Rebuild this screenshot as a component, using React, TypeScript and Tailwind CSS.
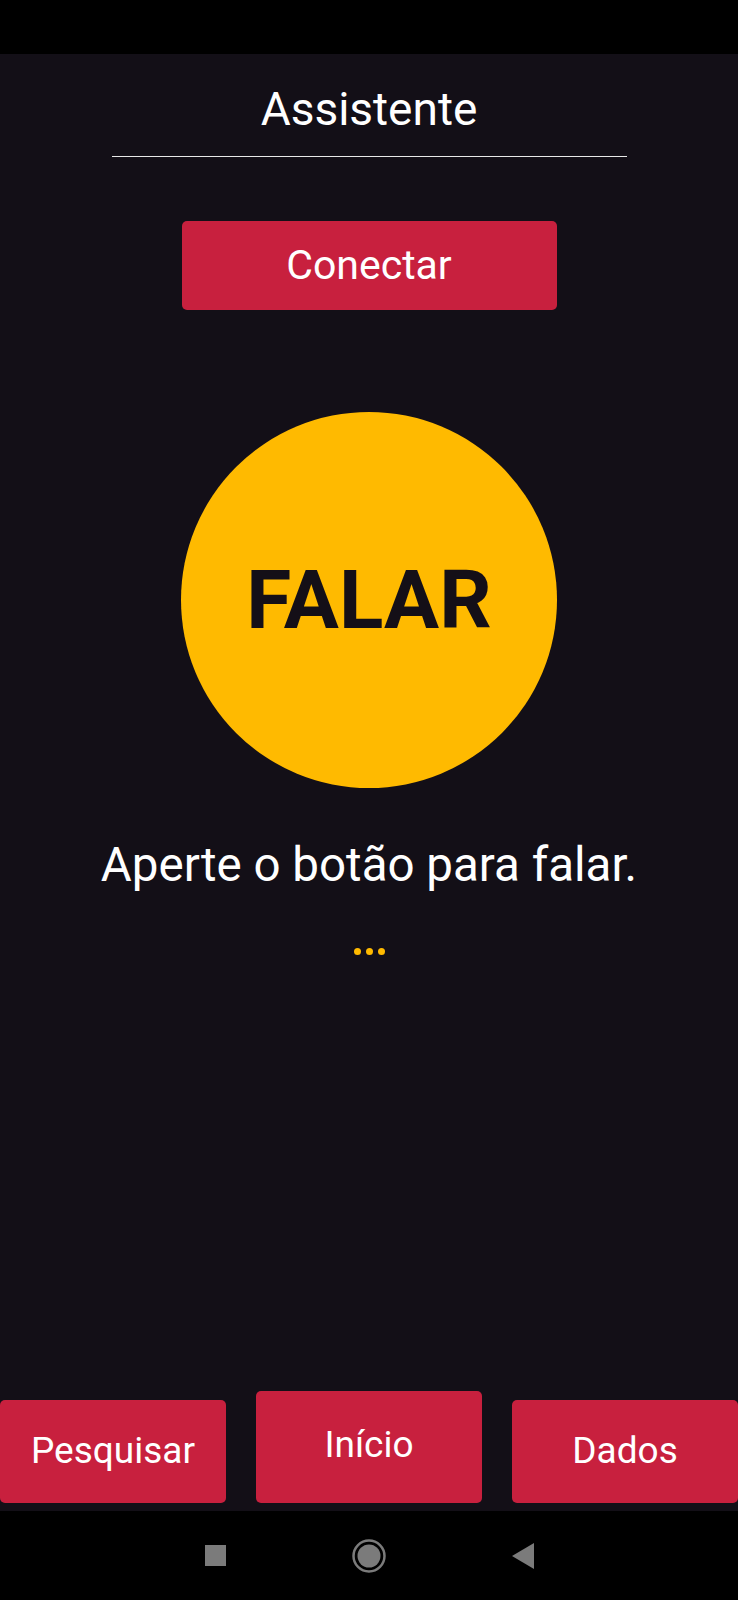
import React from 'react';

const NavButton: React.FC<{ label: string; tall?: boolean }> = ({ label, tall }) => (
  <button
    className={`w-[226px] ${tall ? 'h-[112px] pb-[6px]' : 'h-[103px] pb-[3px]'} bg-[#c8203e] rounded-[5px] flex items-center justify-center text-white text-[37px] leading-none`}
  >
    {label}
  </button>
);

const App: React.FC = () => {
  return (
    <div className="w-[738px] h-[1600px] flex flex-col bg-black font-['Roboto',sans-serif]">
      {/* status bar */}
      <div className="h-[54px] bg-black" />

      <main className="flex-1 bg-[#130f17] flex flex-col items-center">
        <h1 className="mt-[28px] text-white text-[46px] leading-[54px] font-normal">Assistente</h1>
        <div className="mt-[20px] w-[515px] h-px bg-[#e8e8e8]" />

        <button className="mt-[64px] w-[375px] h-[89px] bg-[#c8203e] rounded-[5px] text-white text-[41px] leading-none flex items-center justify-center">
          Conectar
        </button>

        <button className="mt-[102px] w-[376px] h-[376px] rounded-full bg-[#ffba00] flex items-center justify-center">
          <span className="text-[#140f17] text-[82px] font-bold leading-none">FALAR</span>
        </button>

        <p className="mt-[50px] text-white text-[47.5px] leading-[55px]">Aperte o botão para falar.</p>
        <div className="mt-[55px] flex gap-[5px]">
          <span className="w-[7px] h-[7px] rounded-full bg-[#ffba00]" />
          <span className="w-[7px] h-[7px] rounded-full bg-[#ffba00]" />
          <span className="w-[7px] h-[7px] rounded-full bg-[#ffba00]" />
        </div>

        <div className="flex-1" />

        <div className="w-full flex items-end justify-between pb-[8px]">
          <NavButton label="Pesquisar" />
          <NavButton label="Início" tall />
          <NavButton label="Dados" />
        </div>
      </main>

      {/* android nav bar */}
      <div className="h-[89px] bg-black flex items-center justify-center gap-[126px]">
        <div className="w-[21px] h-[21px] bg-[#7b7b7b]" />
        <svg width="34" height="34" viewBox="0 0 34 34">
          <circle cx="17" cy="17" r="15.5" fill="none" stroke="#7b7b7b" strokeWidth="2.5" />
          <circle cx="17" cy="17" r="11.5" fill="#7b7b7b" />
        </svg>
        <svg width="22" height="26" viewBox="0 0 22 26">
          <polygon points="22,0 22,26 0,13" fill="#7b7b7b" />
        </svg>
      </div>
    </div>
  );
};

export default App;
